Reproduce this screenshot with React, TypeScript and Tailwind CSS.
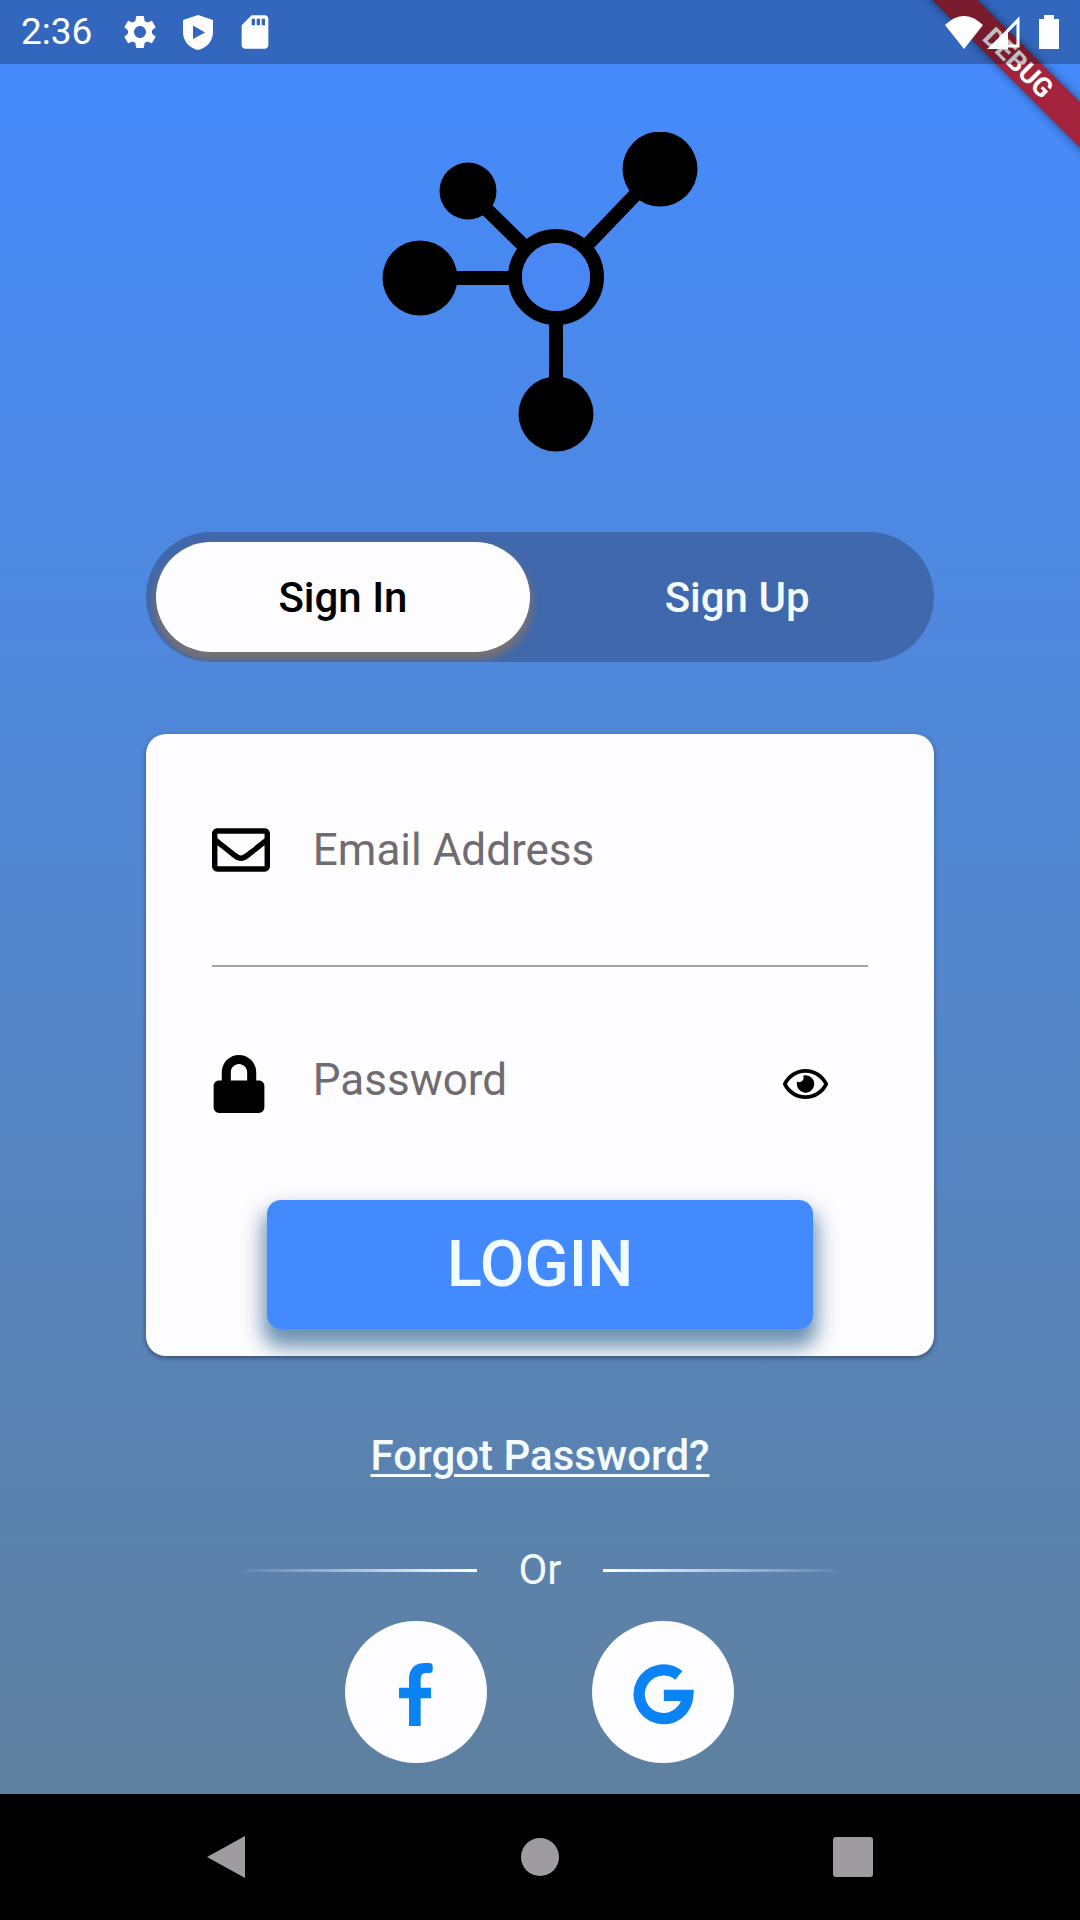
import { useState } from 'react';
import { FaRegEnvelope, FaLock, FaRegEye } from 'react-icons/fa';
import { MdSettings, MdSdCard } from 'react-icons/md';

function StatusBar() {
  return (
    <header className="relative z-10 flex h-16 items-center justify-between bg-black/25 pr-[21px] pl-[21px] text-white">
      <div className="flex items-center">
        <span className="w-[99px] text-[37px]">2:36</span>
        <MdSettings className="size-10" />
        <svg viewBox="0 0 30 35" className="ml-[23px] h-[35px] w-[30px]" fill="currentColor" aria-hidden="true">
          <path fillRule="evenodd" d="M15 0 30 5v12c0 9-6 16-15 18C6 33 0 26 0 17V5ZM10 10.500v13.500L22 17.500Z" />
        </svg>
        <MdSdCard className="ml-[22px] size-10" />
      </div>
      <div className="flex items-center">
        <svg viewBox="0 0 38 33" className="h-[33px] w-[38px]" fill="currentColor" aria-hidden="true">
          <path d="M0 9Q19-9 38 9L19 33Z" />
        </svg>
        <svg viewBox="0 0 34 33" className="ml-1 h-[33px] w-[34px]" aria-hidden="true">
          <path d="M0 33 21 13V33Z" fill="currentColor" />
          <path d="M6 30 31 4V30Z" fill="none" stroke="currentColor" strokeWidth="3" />
        </svg>
        <svg viewBox="0 0 20 34" className="ml-[18px] h-[34px] w-5" fill="currentColor" aria-hidden="true">
          <path d="M5 0h10v4h5v30H0V4h5Z" />
        </svg>
      </div>
    </header>
  );
}

function DebugBanner() {
  return (
    <div className="absolute top-0 right-0 size-40 overflow-hidden">
      <div className="absolute top-[47px] -left-[27px] flex h-8 w-[250px] rotate-45 items-center justify-center bg-[#a3243c] text-[27px] font-bold text-white shadow-[0_0_10px_rgba(0,0,0,0.5)]">
        DEBUG
      </div>
    </div>
  );
}

function Logo() {
  return (
    <svg viewBox="381 132 318 320" className="mx-auto mt-[68px] h-80 w-[318px]" role="img" aria-label="Logo">
      <g stroke="#000" strokeWidth="14">
        <path d="M468 191 522 244M660 169 589 243M420 278H516M556 318V414" fill="none" />
        <circle cx="556" cy="277" r="41" fill="none" />
      </g>
      <circle cx="556" cy="277" r="34" fill="#4987f4" />
      <circle cx="468" cy="191" r="28.500" />
      <circle cx="660" cy="169" r="37.500" />
      <circle cx="420" cy="278" r="37.500" />
      <circle cx="556" cy="414" r="37.500" />
    </svg>
  );
}

function FacebookIcon() {
  return (
    <svg viewBox="240 188 102 189" className="h-[63px] w-[34px]" fill="#0a84f5" aria-hidden="true">
      <path d="M270 377V294H240V262H270V236C270 205 288 188 318 188H330Q341 188 341 198V210Q341 218 330 218H323C311 218 305 224 305 236V262H336V294H305V377Z" />
    </svg>
  );
}

function GoogleIcon() {
  return (
    <svg viewBox="940 192 182 183" className="size-[61px]" fill="none" stroke="#0a84f5" strokeWidth="34" aria-hidden="true">
      <path d="M1077 226A73 73 0 1 0 1104 286H1032" />
    </svg>
  );
}

export default function App() {
  const [tab, setTab] = useState<'in' | 'up'>('in');
  const [visible, setVisible] = useState(false);
  const base = 'h-[110px] flex-1 rounded-full text-[42px] font-medium';
  const on = 'bg-[#fdfcfe] text-black shadow-[0_6px_8px_2px_rgba(125,115,105,0.9)]';
  const off = 'text-[#f2fbff]';

  return (
    <div className="relative flex min-h-screen flex-col overflow-hidden bg-black font-['Roboto',sans-serif]">
      <div className="flex flex-1 flex-col bg-linear-to-b from-[#448aff] to-[#5f809f]">
        <DebugBanner />
        <StatusBar />
        <main className="mx-auto flex w-[73%] flex-1 flex-col">
          <Logo />
          <div className="mt-20 flex items-center gap-5 overflow-hidden rounded-full bg-[#4068ac] p-[10px]">
            <button type="button" onClick={() => setTab('in')} className={`${base} ${tab === 'in' ? on : off}`}>Sign In</button>
            <button type="button" onClick={() => setTab('up')} className={`${base} ${tab === 'up' ? on : off}`}>Sign Up</button>
          </div>

          <form
            className="mt-[72px] flex flex-col overflow-hidden rounded-[20px] bg-[#fdfcfe] shadow-[0_2px_5px_rgba(0,0,0,0.4)]"
            onSubmit={(e) => e.preventDefault()}
          >
            <div className="mx-[66px] flex h-[233px] items-center border-b-2 border-[#a5a3a6]">
              <label htmlFor="email" className="w-[101px] shrink-0">
                <FaRegEnvelope className="size-[58px]" aria-label="Email" />
              </label>
              <input
                id="email"
                type="email"
                placeholder="Email Address"
                className="min-w-0 flex-1 bg-transparent text-[44px] text-black outline-none placeholder:text-[#706b70]"
              />
            </div>
            <div className="mx-[66px] flex h-[233px] items-center">
              <label htmlFor="password" className="w-[101px] shrink-0">
                <FaLock className="h-[58px] w-[54px]" aria-label="Password" />
              </label>
              <input
                id="password"
                type={visible ? 'text' : 'password'}
                placeholder="Password"
                className="min-w-0 flex-1 bg-transparent pb-2 text-[44px] text-black outline-none placeholder:text-[#706b70]"
              />
              <button type="button" aria-label="Show password" onClick={() => setVisible(!visible)} className="mr-10">
                <FaRegEye className="h-10 w-[45px]" />
              </button>
            </div>
            <button
              type="submit"
              className="mx-auto mb-[27px] h-[129px] w-[546px] rounded-[14px] bg-[#448aff] text-[65px] font-medium text-[#f2fbff] shadow-[0_14px_20px_4px_rgba(80,125,165,0.85)]"
            >
              LOGIN
            </button>
          </form>

          <a href="#forgot" className="mt-[75px] self-center text-[42px] leading-[50px] font-medium text-[#f2fbff] underline decoration-[3px] underline-offset-4">
            Forgot Password?
          </a>

          <div className="mt-16 flex items-center justify-center gap-[41px] text-[42px] leading-[50px] text-[#f2fbff]">
            <span className="h-[3px] w-[232px] bg-linear-to-r from-white/5 to-white" />
            Or
            <span className="h-[3px] w-[232px] bg-linear-to-r from-white to-white/5" />
          </div>

          <div className="mt-[26px] mb-[29px] flex justify-center gap-[105px]">
            <button type="button" aria-label="Continue with Facebook" className="flex size-[142px] items-center justify-center rounded-full bg-[#fdfcfe] pt-1">
              <FacebookIcon />
            </button>
            <button type="button" aria-label="Continue with Google" className="flex size-[142px] items-center justify-center rounded-full bg-[#fdfcfe] pt-1">
              <GoogleIcon />
            </button>
          </div>
        </main>
      </div>

      <nav className="flex h-[126px] items-center justify-around bg-black px-[70px] text-[#9e9c9f]">
        <button type="button" aria-label="Back">
          <svg viewBox="0 0 40 42" className="h-[42px] w-10" fill="currentColor"><path d="M0 21 38 0V42Z" /></svg>
        </button>
        <button type="button" aria-label="Home">
          <svg viewBox="0 0 40 40" className="size-10" fill="currentColor"><circle cx="20" cy="20" r="19" /></svg>
        </button>
        <button type="button" aria-label="Recent apps">
          <svg viewBox="0 0 40 40" className="size-10" fill="currentColor"><rect width="40" height="40" rx="3" /></svg>
        </button>
      </nav>
    </div>
  );
}
